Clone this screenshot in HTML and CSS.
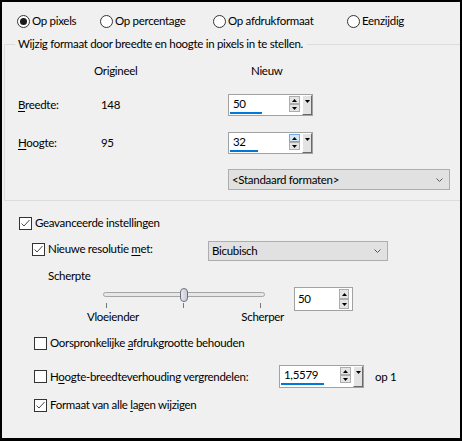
FILE: index.html
```html
<!DOCTYPE html>
<html>
<head>
<meta charset="utf-8">
<link rel="stylesheet" href="styles.css">
</head>
<body>
<div class="window">
  <div class="radios">
    <div class="radio-item w1"><span class="radio on"></span><span>Op pixels</span></div>
    <div class="radio-item w2"><span class="radio"></span><span>Op percentage</span></div>
    <div class="radio-item w3"><span class="radio"></span><span>Op afdrukformaat</span></div>
    <div class="radio-item"><span class="radio"></span><span>Eenzijdig</span></div>
  </div>

  <fieldset class="group">
    <legend>Wijzig formaat door breedte en hoogte in pixels in te stellen.</legend>
    <div class="hdr"><span class="h-orig">Origineel</span><span>Nieuw</span></div>

    <div class="dim-row r1">
      <span class="dim-label"><u>B</u>reedte:</span>
      <span class="dim-val">148</span>
      <div class="spin s-dim">
        <div class="spin-field"><span class="spin-text">50</span><span class="spin-bar" style="width:32px"></span></div>
        <div class="spin-arrows">
          <span class="arr"><svg viewBox="0 0 5 3"><path d="M0 3 L2.5 0 L5 3 Z" fill="#000"/></svg></span>
          <span class="arr"><svg viewBox="0 0 5 3"><path d="M0 0 L2.5 3 L5 0 Z" fill="#000"/></svg></span>
        </div>
        <div class="drop"><svg viewBox="0 0 5 3"><path d="M0 0 L2.5 3 L5 0 Z" fill="#000"/></svg></div>
      </div>
    </div>

    <div class="dim-row r2">
      <span class="dim-label"><u>H</u>oogte:</span>
      <span class="dim-val">95</span>
      <div class="spin s-dim">
        <div class="spin-field"><span class="spin-text">32</span><span class="spin-bar" style="width:28px"></span></div>
        <div class="spin-arrows">
          <span class="arr hot"><svg viewBox="0 0 5 3"><path d="M0 3 L2.5 0 L5 3 Z" fill="#000"/></svg></span>
          <span class="arr"><svg viewBox="0 0 5 3"><path d="M0 0 L2.5 3 L5 0 Z" fill="#000"/></svg></span>
        </div>
        <div class="drop"><svg viewBox="0 0 5 3"><path d="M0 0 L2.5 3 L5 0 Z" fill="#000"/></svg></div>
      </div>
    </div>

    <div class="combo c-std">
      <span>&lt;Standaard formaten&gt;</span>
      <svg class="chev" viewBox="0 0 7 4"><path d="M0.5 0.5 L3.5 3.5 L6.5 0.5" fill="none" stroke="#5a5a5a" stroke-width="1"/></svg>
    </div>
  </fieldset>

  <div class="row a1">
    <span class="chk"><svg viewBox="0 0 11 11"><polyline points="1.5,5.5 4,8 9.5,2" fill="none" stroke="#333" stroke-width="0.9"/></svg></span>
    <span>Geavanceerde instellingen</span>
  </div>

  <div class="row a2">
    <div class="lbl-group g-res">
      <span class="chk"><svg viewBox="0 0 11 11"><polyline points="1.5,5.5 4,8 9.5,2" fill="none" stroke="#333" stroke-width="0.9"/></svg></span>
      <span>Nieuwe resolutie <u>m</u>et:</span>
    </div>
    <div class="combo c-bic">
      <span>Bicubisch</span>
      <svg class="chev" viewBox="0 0 7 4"><path d="M0.5 0.5 L3.5 3.5 L6.5 0.5" fill="none" stroke="#5a5a5a" stroke-width="1"/></svg>
    </div>
  </div>

  <div class="a3">Scherpte</div>

  <div class="row a4">
    <div class="slider">
      <div class="track-area">
        <div class="track"></div>
        <div class="thumb"></div>
      </div>
      <div class="ticks"><span class="tick"></span><span class="tick"></span><span class="tick"></span></div>
      <div class="slabels"><span>Vloeiender</span><span>Scherper</span></div>
    </div>
    <div class="spin s-sharp">
      <div class="spin-field mid"><span class="spin-text">50</span></div>
      <div class="spin-arrows tall">
        <span class="arr"><svg viewBox="0 0 5 3"><path d="M0 3 L2.5 0 L5 3 Z" fill="#000"/></svg></span>
        <span class="arr"><svg viewBox="0 0 5 3"><path d="M0 0 L2.5 3 L5 0 Z" fill="#000"/></svg></span>
      </div>
    </div>
  </div>

  <div class="row a5">
    <span class="chk"></span>
    <span>Oorspronkelijke <u>a</u>fdrukgrootte behouden</span>
  </div>

  <div class="row a6">
    <div class="lbl-group g-ratio">
      <span class="chk"></span>
      <span>H<u>o</u>ogte-breedteverhouding vergrendelen:</span>
    </div>
    <div class="spin s-dim">
      <div class="spin-field"><span class="spin-text">1,5579</span><span class="spin-bar" style="width:43px"></span></div>
      <div class="spin-arrows">
        <span class="arr"><svg viewBox="0 0 5 3"><path d="M0 3 L2.5 0 L5 3 Z" fill="#000"/></svg></span>
        <span class="arr"><svg viewBox="0 0 5 3"><path d="M0 0 L2.5 3 L5 0 Z" fill="#000"/></svg></span>
      </div>
      <div class="drop"><svg viewBox="0 0 5 3"><path d="M0 0 L2.5 3 L5 0 Z" fill="#000"/></svg></div>
    </div>
    <span class="op1">op 1</span>
  </div>

  <div class="row a7">
    <span class="chk"><svg viewBox="0 0 11 11"><polyline points="1.5,5.5 4,8 9.5,2" fill="none" stroke="#333" stroke-width="0.9"/></svg></span>
    <span>Formaat van alle <u>l</u>agen wijzigen</span>
  </div>
</div>
</body>
</html>
```

FILE: styles.css
```css
* { box-sizing: border-box; }
html, body { margin: 0; padding: 0; background: #f0f0f0; }
body {
  font-family: Lato, "Noto Sans", sans-serif;
  font-size: 11.5px;
  letter-spacing: -0.3px;
  line-height: 16px;
  color: #000;
}
u { text-decoration: underline; text-underline-offset: 2px; }

.window {
  width: 462px;
  height: 441px;
  border: 2px solid #000;
  border-bottom-width: 3px;
  background: #f0f0f0;
  padding-top: 11px;
  overflow: hidden;
}

/* radios */
.radios { display: flex; align-items: center; height: 16px; padding-left: 15px; }
.radio-item { display: flex; align-items: center; gap: 2px; white-space: nowrap; }
.w1 { width: 83px; }
.w2 { width: 113px; }
.w3 { width: 134px; }
.radio {
  width: 13px; height: 13px;
  border: 1px solid #333;
  border-radius: 50%;
  background: #fff;
  display: flex; align-items: center; justify-content: center;
  flex: none;
}
.radio.on::after {
  content: "";
  width: 7px; height: 7px;
  border-radius: 50%;
  background: #1b1b1b;
}

/* group box */
.group {
  margin: 7px 0 0 2px;
  padding: 0 0 10px 13px;
  border: 1px solid #dcdcdc;
  border-right: none;
  min-width: 0;
}
.group legend { padding: 0 4px 0 3px; margin-left: -3px; line-height: 16px; }
.hdr { display: flex; margin-top: 10px; height: 18px; line-height: 18px; padding-left: 76px; }
.h-orig { width: 157px; }
.dim-row { display: flex; align-items: center; height: 22px; }
.r1 { margin-top: 14px; }
.r2 { margin-top: 16px; }
.dim-label { width: 83px; }
.dim-val { width: 127px; }

/* spin boxes */
.spin {
  display: flex;
  background: #fff;
  border: 1px solid #a2a2a2;
  flex: none;
}
.s-dim { width: 85px; height: 22px; }
.s-sharp { width: 59px; height: 24px; margin-left: 10px; }
.spin-field { flex: 1; display: flex; flex-direction: column; padding: 1px 0 0 1px; }
.spin-field.mid { justify-content: center; padding: 0; }
.spin-text { padding-left: 3px; line-height: 16px; }
.spin-bar { height: 2px; background: #0078d7; }
.spin-arrows { display: flex; flex-direction: column; width: 11px; margin-top: 1px; }
.spin-arrows.tall { width: 10px; margin: 1px 3px 0 0; }
.arr {
  height: 8px;
  border: 1px solid #adadad;
  background: #e5e5e5;
  display: flex; align-items: center; justify-content: center;
}
.spin-arrows.tall .arr { height: 10px; }
.arr.hot { background: #d5e8f8; border-color: #6fa9e0; }
.arr svg { width: 5px; height: 3px; display: block; }
.drop {
  width: 10px;
  margin-left: 2px;
  background: #e3e3e3;
  border-top: 1px solid #fff;
  border-left: 1px solid #fff;
  border-right: 1px solid #696969;
  border-bottom: 1px solid #696969;
  display: flex; justify-content: center; align-items: flex-start;
  padding-top: 4px;
}
.drop svg { width: 5px; height: 3px; display: block; }

/* combos */
.combo {
  display: flex; align-items: center; justify-content: space-between;
  background: #e1e1e1;
  border: 1px solid #adadad;
  padding: 0 6px 0 3px;
}
.chev { width: 7px; height: 4px; display: block; }
.c-std { margin: 15px 0 0 210px; width: 222px; height: 21px; }
.c-bic { width: 180px; height: 20px; }

/* lower section */
.row { display: flex; align-items: center; }
.chk {
  width: 13px; height: 13px;
  border: 1px solid #333;
  background: #fff;
  margin-right: 3px;
  flex: none;
  display: flex; align-items: center; justify-content: center;
}
.chk svg { width: 11px; height: 11px; display: block; }
.lbl-group { display: flex; align-items: center; height: 16px; }
.a1 { margin-top: 12px; height: 20px; padding-left: 17px; }
.a2 { margin-top: 8px; height: 20px; padding-left: 30px; align-items: flex-start; }
.g-res { width: 176px; }
.a3 { margin-top: 7px; padding-left: 46px; line-height: 16px; }
.a4 { margin-top: 3px; padding-left: 85px; align-items: flex-start; }
.slider { width: 197px; }
.track-area {
  position: relative;
  height: 15px;
  margin-left: 16px;
  width: 162px;
  display: flex; align-items: center;
}
.track {
  width: 100%; height: 5px;
  border: 1px solid #a5a5a5;
  border-radius: 3px;
  background: #e7e7e7;
}
.thumb {
  position: absolute;
  left: calc(50% - 4px);
  top: 1px;
  width: 8px; height: 14px;
  border: 1px solid #6e6e7e;
  border-radius: 4px;
  background: linear-gradient(90deg, #e8e8f2, #c9c9d9);
}
.ticks { display: flex; justify-content: space-between; margin: 1px 0 0 19px; width: 155px; height: 5px; }
.tick { width: 1px; background: #777; }
.slabels { display: flex; justify-content: space-between; margin-top: 1px; line-height: 16px; }
.a5 { margin-top: 8px; height: 20px; padding-left: 32px; }
.a6 { margin-top: 12px; height: 23px; padding-left: 32px; }
.a6 .s-dim { height: 23px; }
.g-ratio { width: 245px; }
.op1 { margin-left: 11px; }
.a7 { margin-top: 7px; height: 20px; padding-left: 32px; }
```
